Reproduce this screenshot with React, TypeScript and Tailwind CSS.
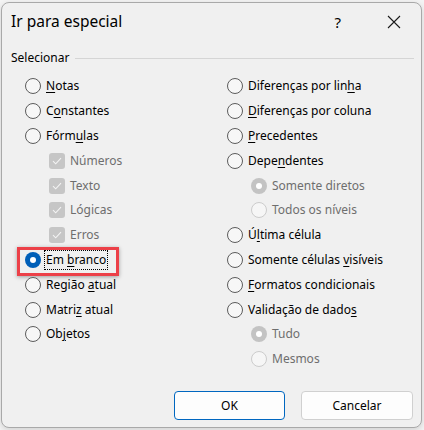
import type { ReactNode } from "react";

type Item = {
    label: ReactNode;
    kind: "radio" | "check" | "subradio";
    checked?: boolean;
    disabled?: boolean;
    focus?: boolean;
};

function Radio({ checked, disabled }: { checked?: boolean; disabled?: boolean }) {
    if (checked) {
        return (
            <span
                className={`flex h-4 w-4 shrink-0 items-center justify-center rounded-full ${
                    disabled ? "bg-[#c3c3c3]" : "bg-[#005fb8]"
                }`}
            >
                <span className="h-[6px] w-[6px] rounded-full bg-white" />
            </span>
        );
    }
    return (
        <span
            className={`h-4 w-4 shrink-0 rounded-full border ${
                disabled ? "border-[#cccccc] bg-[#f6f6f6]" : "border-[#5c5c5c] bg-[#f7f7f7]"
            }`}
        />
    );
}

function Check() {
    return (
        <span className="flex h-4 w-4 shrink-0 items-center justify-center rounded-[3px] bg-[#c6c6c6]">
            <svg width="10" height="8" viewBox="0 0 10 8" fill="none">
                <path d="M1 4.2 3.7 6.8 9 1.2" stroke="#f4f4f4" strokeWidth="1.1" />
            </svg>
        </span>
    );
}

function Row({ item }: { item: Item }) {
    const indent = item.kind === "radio" ? "" : "pl-6";
    const color = item.disabled ? "text-[#6e6e6e]" : "text-black";
    return (
        <div className={`relative flex h-[24.8px] items-center gap-[5px] ${indent}`}>
            {item.kind === "check" ? (
                <Check />
            ) : (
                <Radio checked={item.checked} disabled={item.disabled} />
            )}
            <span
                className={`${color} ${
                    item.focus ? "-ml-[2px] border border-dotted border-black px-[1px] leading-[18px]" : ""
                }`}
            >
                {item.label}
            </span>
            {item.focus && (
                <div className="pointer-events-none absolute -left-[8px] top-[-1px] h-[29px] w-[102px] border-[3px] border-[#ec4048] shadow-[0_1px_4px_rgba(0,0,0,0.35)]" />
            )}
        </div>
    );
}

const U = ({ children }: { children: ReactNode }) => (
    <span className="underline underline-offset-[2px]">{children}</span>
);

const left: Item[] = [
    { kind: "radio", label: <><U>N</U>otas</> },
    { kind: "radio", label: <>C<U>o</U>nstantes</> },
    { kind: "radio", label: <>Fórm<U>u</U>las</> },
    { kind: "check", disabled: true, label: "Números" },
    { kind: "check", disabled: true, label: "Texto" },
    { kind: "check", disabled: true, label: "Lógicas" },
    { kind: "check", disabled: true, label: "Erros" },
    { kind: "radio", checked: true, focus: true, label: <>Em <U>b</U>ranco</> },
    { kind: "radio", label: <>Região <U>a</U>tual</> },
    { kind: "radio", label: <>Matri<U>z</U> atual</> },
    { kind: "radio", label: <>Ob<U>j</U>etos</> },
];

const right: Item[] = [
    { kind: "radio", label: <>Diferenças por lin<U>h</U>a</> },
    { kind: "radio", label: <><U>D</U>iferenças por coluna</> },
    { kind: "radio", label: <><U>P</U>recedentes</> },
    { kind: "radio", label: <>Depe<U>n</U>dentes</> },
    { kind: "subradio", checked: true, disabled: true, label: "Somente diretos" },
    { kind: "subradio", disabled: true, label: "Todos os níveis" },
    { kind: "radio", label: <>Ú<U>l</U>tima célula</> },
    { kind: "radio", label: <>Somente células <U>v</U>isíveis</> },
    { kind: "radio", label: <><U>F</U>ormatos condicionais</> },
    { kind: "radio", label: <>Validação de dado<U>s</U></> },
    { kind: "subradio", checked: true, disabled: true, label: "Tudo" },
    { kind: "subradio", disabled: true, label: "Mesmos" },
];

export default function App() {
    return (
        <div className="h-[430px] w-[424px] overflow-hidden bg-[#f4f4f4] font-['Noto_Sans',sans-serif]">
            <div className="ml-px mt-[2px] flex h-[426px] w-[421px] flex-col rounded-[8px] border border-[#a9a9a9] bg-[#f0f0f0] shadow-[0_2px_6px_rgba(0,0,0,0.15)]">
                {/* Title bar */}
                <div className="flex h-[38px] items-center pl-[9px] pr-[20px] text-black">
                    <span className="text-[15.5px]">Ir para especial</span>
                    <span className="ml-auto mr-[46px] text-[15px]">?</span>
                    <svg width="14" height="14" viewBox="0 0 14 14">
                        <path d="M1 1 13 13M13 1 1 13" stroke="#1a1a1a" strokeWidth="1.1" />
                    </svg>
                </div>

                {/* Group */}
                <div className="flex items-center gap-[6px] pl-[9px] pr-[7px] pt-[8px] text-[12px] text-black">
                    <span>Selecionar</span>
                    <div className="h-px flex-1 bg-[#d5d5d5]" />
                </div>

                <div className="mt-[7px] grid grid-cols-[202px_1fr] pl-[23px] text-[12px]">
                    <div className="flex flex-col">
                        {left.map((item, i) => (
                            <Row key={i} item={item} />
                        ))}
                    </div>
                    <div className="flex flex-col">
                        {right.map((item, i) => (
                            <Row key={i} item={item} />
                        ))}
                    </div>
                </div>

                {/* Buttons */}
                <div className="mt-auto mb-[7px] flex justify-end gap-4 pr-[8px] text-[12px]">
                    <button className="h-[29px] w-[111px] rounded-[4px] border border-[#0067c0] bg-[#fdfdfd] text-black">
                        OK
                    </button>
                    <button className="h-[29px] w-[112px] rounded-[4px] border border-[#d0d0d0] bg-[#fdfdfd] text-black">
                        Cancelar
                    </button>
                </div>
            </div>
        </div>
    );
}
